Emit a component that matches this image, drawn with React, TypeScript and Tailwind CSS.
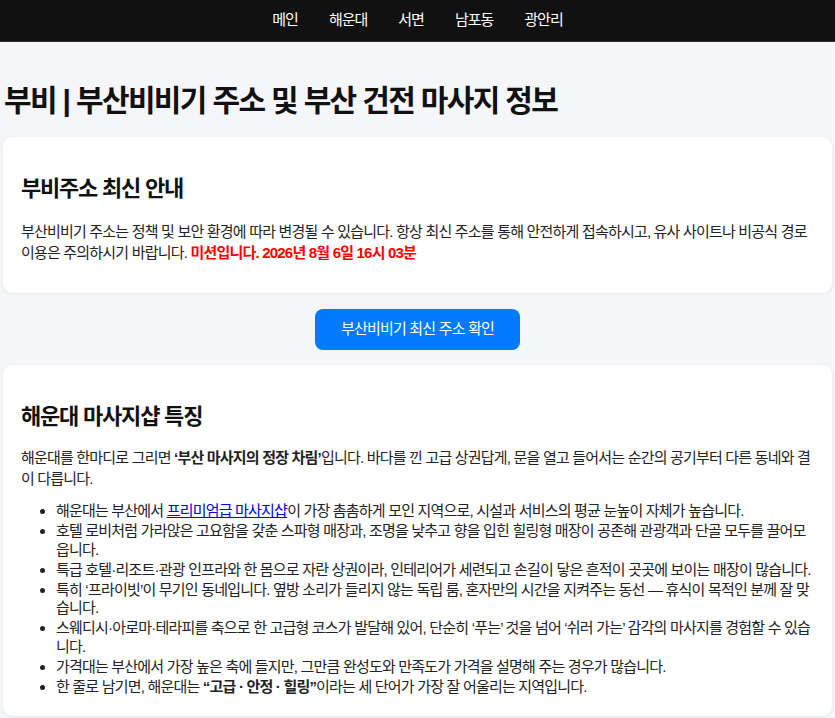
import React from "react";

const font = { fontFamily: '"Liberation Sans", "Noto Sans CJK KR", sans-serif' };

export default function App() {
  const nav = ["메인", "해운대", "서면", "남포동", "광안리"];
  return (
    <div className="min-h-[718px] bg-[#f5f6fa] text-[#222]" style={font}>
      <nav className="h-[42px] bg-[#111111] flex items-center justify-center gap-[31px] border-b border-[#333] tracking-[-1px]">
        {nav.map((n) => (
          <a key={n} className="text-white text-[15px]">{n}</a>
        ))}
      </nav>
      <div className="px-[3px]">
        <h1 className="text-[30px] font-bold text-[#111] mt-[37px] mb-[14px] pl-[1px] leading-[44px] tracking-[-1.65px]">
          부비 | 부산비비기 주소 및 부산 건전 마사지 정보
        </h1>
        <section className="bg-white rounded-[10px] shadow-[0_1px_4px_rgba(0,0,0,0.06)] px-[18px] pt-[18px] pb-[14px]">
          <h2 className="text-[22px] font-bold text-[#111] mt-[18px] mb-[16px] leading-[32px] tracking-[-1.2px]">부비주소 최신 안내</h2>
          <p className="text-[15px] leading-[21px] text-[#222] mb-[16px] tracking-[-0.8px]">
            부산비비기 주소는 정책 및 보안 환경에 따라 변경될 수 있습니다. 항상 최신 주소를 통해 안전하게 접속하시고, 유사 사이트나 비공식 경로 이용은 주의하시기 바랍니다.{" "}
            <span className="text-[#ff0000] font-bold">미션입니다. 2026년 8월 6일 16시 03분</span>
          </p>
        </section>
        <div className="flex justify-center mt-[16px] mb-[15px]">
          <a className="bg-[#007bff] text-white text-[15px] rounded-[8px] w-[205px] h-[41px] flex items-center justify-center tracking-[-0.8px]">
            부산비비기 최신 주소 확인
          </a>
        </div>
        <section className="bg-white rounded-[10px] shadow-[0_1px_4px_rgba(0,0,0,0.06)] px-[18px] pt-[18px] pb-[20px]">
          <h2 className="text-[22px] font-bold text-[#111] mt-[18px] mb-[14px] leading-[32px] tracking-[-1.2px]">해운대 마사지샵 특징</h2>
          <div className="tracking-[-0.8px]">
            <p className="text-[15px] leading-[21px] text-[#222]">
              해운대를 한마디로 그리면 <strong>‘부산 마사지의 정장 차림’</strong>입니다. 바다를 낀 고급 상권답게, 문을 열고 들어서는 순간의 공기부터 다른 동네와 결이 다릅니다.
            </p>
            <ul className="list-disc pl-[35px] mt-[13px] text-[15px] leading-[18.5px] text-[#222] flex flex-col gap-[1.5px]">
              <li>
                해운대는 부산에서 <a className="text-[#0000ee] underline">프리미엄급 마사지샵</a>이 가장 촘촘하게 모인 지역으로, 시설과 서비스의 평균 눈높이 자체가 높습니다.
              </li>
              <li>호텔 로비처럼 가라앉은 고요함을 갖춘 스파형 매장과, 조명을 낮추고 향을 입힌 힐링형 매장이 공존해 관광객과 단골 모두를 끌어모읍니다.</li>
              <li>특급 호텔·리조트·관광 인프라와 한 몸으로 자란 상권이라, 인테리어가 세련되고 손길이 닿은 흔적이 곳곳에 보이는 매장이 많습니다.</li>
              <li>특히 ‘프라이빗’이 무기인 동네입니다. 옆방 소리가 들리지 않는 독립 룸, 혼자만의 시간을 지켜주는 동선 — 휴식이 목적인 분께 잘 맞습니다.</li>
              <li>스웨디시·아로마·테라피를 축으로 한 고급형 코스가 발달해 있어, 단순히 ‘푸는’ 것을 넘어 ‘쉬러 가는’ 감각의 마사지를 경험할 수 있습니다.</li>
              <li>가격대는 부산에서 가장 높은 축에 들지만, 그만큼 완성도와 만족도가 가격을 설명해 주는 경우가 많습니다.</li>
              <li>
                한 줄로 남기면, 해운대는 <strong>“고급 · 안정 · 힐링”</strong>이라는 세 단어가 가장 잘 어울리는 지역입니다.
              </li>
            </ul>
          </div>
        </section>
      </div>
    </div>
  );
}
